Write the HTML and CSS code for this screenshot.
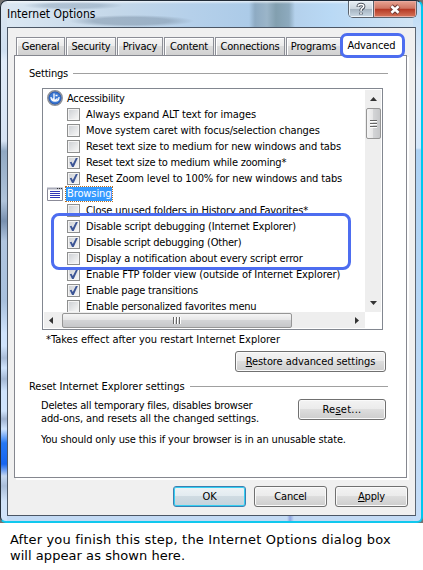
FILE: index.html
```html
<!DOCTYPE html>
<html lang="en">
<head>
<meta charset="utf-8">
<title>Internet Options</title>
<link rel="stylesheet" href="styles.css">
</head>
<body>
<div class="desktop">
<section class="window">
  <header class="titlebar">
    <h1>Internet Options</h1>
    <div class="caption">
      <span class="cap help"><svg width="12" height="14" viewBox="0 0 12 14"><path d="M3.200 5Q3.200 2.500 6 2.500T8.700 4.400Q8.700 5.600 7.300 6.400T6 9.200M6 10.500v2" fill="none" stroke="#4f5763" stroke-width="3.400"/><path d="M3.200 4.500Q3.200 2.500 6 2.500T8.700 4.200Q8.700 5.400 7.300 6.200T6 9M6 10.500v1.700" fill="none" stroke="#fff" stroke-width="1.500"/></svg></span>
      <span class="cap close"><svg width="14" height="11" viewBox="0 0 14 11"><path d="M3.200 2l7.600 7M10.800 2l-7.600 7" stroke="#703b36" stroke-width="4.600"/><path d="M3.400 2.200l7.200 6.600M10.600 2.200L3.400 8.800" stroke="#fff" stroke-width="2.600"/></svg></span>
    </div>
  </header>
  <main class="client">
    <nav class="tabs">
      <span class="tab t1">General</span><span class="tab t2">Security</span><span class="tab t3">Privacy</span><span class="tab t4">Content</span><span class="tab t5">Connections</span><span class="tab t6">Programs</span><span class="tab active">Advanced</span>
    </nav>
    <div class="panel">
      <h2 class="legend"><span>Settings</span></h2>
      <div class="listbox">
        <ul class="list">
          <li class="group"><svg width="16" height="16" viewBox="0 0 16 16"><circle cx="8" cy="8" r="7.200" fill="#2456b0" stroke="#8f9299" stroke-width="1.600"/><circle cx="8" cy="8" r="5.700" fill="#3c78d2"/><path d="M7 3.500v6M4 7q0 4 4 4.200t4-4.200M5.500 8.500L8 10.500l2.500-2M8.500 5.500h2" fill="none" stroke="#fff" stroke-width="1.300"/></svg><span class="name">Accessibility</span></li>
          <li class="wide"><i class="box"></i><span>Always expand ALT text for images</span></li>
          <li><i class="box"></i><span>Move system caret with focus/selection changes</span></li>
          <li><i class="box"></i><span>Reset text size to medium for new windows and tabs</span></li>
          <li class="tight"><i class="box on"></i><span>Reset text size to medium while zooming*</span></li>
          <li><i class="box on"></i><span>Reset Zoom level to 100% for new windows and tabs</span></li>
          <li class="group"><svg width="16" height="16" viewBox="0 0 16 16"><path d="M.5 2.500h15v12H.5z" fill="#fff" stroke="#8b8b98"/><path d="M0 2.500h16" stroke="#a8aab8" stroke-width="2"/><path d="M10 2.500h1M12 2.500h1M14 2.500h1" stroke="#333"/><path d="M3 5.500h10M3 7.500h10M3 9.500h10M3 11.500h10" stroke="#3036b8"/></svg><span class="name selected">Browsing</span></li>
          <li><i class="box"></i><span>Close unused folders in History and Favorites*</span></li>
          <li class="snug"><i class="box on"></i><span>Disable script debugging (Internet Explorer)</span></li>
          <li class="tight"><i class="box on"></i><span>Disable script debugging (Other)</span></li>
          <li class="snug"><i class="box"></i><span>Display a notification about every script error</span></li>
          <li class="wide"><i class="box on"></i><span>Enable FTP folder view (outside of Internet Explorer)</span></li>
          <li class="tight"><i class="box on"></i><span>Enable page transitions</span></li>
          <li class="tight"><i class="box"></i><span>Enable personalized favorites menu</span></li>
        </ul>
        <div class="vscroll">
          <svg class="up" width="7" height="4" viewBox="0 0 7 4"><path d="M0 4L3.500 0L7 4z" fill="#333"/></svg>
          <div class="vthumb"><b></b><b></b><b></b></div>
          <svg class="down" width="7" height="4" viewBox="0 0 7 4"><path d="M0 0h7L3.500 4z" fill="#333"/></svg>
        </div>
        <div class="hscroll">
          <svg width="4" height="7" viewBox="0 0 4 7"><path d="M4 0v7L0 3.500z" fill="#333"/></svg>
          <div class="hthumb"><b></b><b></b><b></b></div>
          <svg width="4" height="7" viewBox="0 0 4 7"><path d="M0 0v7l4-3.500z" fill="#333"/></svg>
        </div>
        <div class="callout"></div>
      </div>
      <p class="note">*Takes effect after you restart Internet Explorer</p>
      <button class="btn restore"><span><u>R</u>estore advanced settings</span></button>
      <h2 class="legend reset-title"><span>Reset Internet Explorer settings</span></h2>
      <div class="reset">
        <p><span class="l1">Deletes all temporary files, disables browser</span><br><span class="l2">add-ons, and resets all the changed settings.</span></p>
        <button class="btn reset-btn"><span>Re<u>s</u>et...</span></button>
      </div>
      <p class="warning">You should only use this if your browser is in an unusable state.</p>
    </div>
    <footer class="actions">
      <button class="btn ok">OK</button><button class="btn">Cancel</button><button class="btn"><span><u>A</u>pply</span></button>
    </footer>
  </main>
</section>
</div>
<p class="article"><span>After you finish this step, the Internet Options dialog box</span><br><span class="second">will appear as shown here.</span></p>
</body>
</html>
```
FILE: styles.css
```css
* { box-sizing: border-box; }
body {
  margin: 0; width: 423px; height: 570px; overflow: hidden; background: #fff; color: #000;
  font: 11px/13px "DejaVu Sans Condensed", "DejaVu Sans", sans-serif;
  font-stretch: condensed; white-space: nowrap; letter-spacing: -0.2px;
}
h1, h2, p, ul { margin: 0; padding: 0; font-size: inherit; font-weight: normal; list-style: none; }
u { text-underline-offset: 1px; }
.desktop { height: 523px; background: #737373; }
.window {
  height: 523px; border: 1px solid #222c38; border-right: 2px solid #00c8f0; border-bottom: 2px solid #10c8ee;
  border-radius: 7px 7px 6px 6px; overflow: hidden;
  background:
    linear-gradient(90deg, transparent 0 286px, #8fa4e0 289px, transparent 293px) 0 100% / 100% 5px no-repeat,
    linear-gradient(180deg, #dce6f0 0, #cfdff0 50px, #e0ebf8 60px, #d6e3f3 140px, #91a9c3 150px, #b0c4db 200px, #7890af 220px, #b0c5df 240px, #a8c0dd 300px, #cfe3fc 332px, #cfe3fc 345px, #a9bcd8 357px, #cfe3fc 367px, #a4b8d4 378px, #cfe3fc 390px, #cfe3fc 410px, #9fb2d0 418px, #cfe3fc 428px, #2678f4 442px, #1765f0 463px, #c4d7f1 475px, #a9bdd9 485px, #d0e2f8 500px) 0 0 / 6px 100% no-repeat,
    linear-gradient(180deg, #b7d8f4 0, #e4eefa 70px, #d5e8fb 147px, #add2f4 149px, #c5ddf7 100%) 100% 0 / 8px 100% no-repeat,
    linear-gradient(180deg, #ffffffb0 0, transparent 3px) 0 0 / 100% 5px no-repeat,
    radial-gradient(closest-side, #8da3b880 55%, transparent) 22px 0 / 100px 9px no-repeat,
    radial-gradient(closest-side, #8297ac90 60%, transparent) 68px 14px / 125px 12px no-repeat,
    linear-gradient(90deg, #dce8f3 0, #c5d8e9 110px, #b5d0ea 190px, #accbe8 248px, #8eabc3 254px, #9bb5c9 266px, #829faf 275px, #8daabe 288px, #b4d1ec 294px, #b9d9f5 330px, #d2e4f3 100%) 0 0 / 100% 27px no-repeat,
    #c3daf4;
  padding: 0 5px 6px 6px;
}
.titlebar { height: 26px; display: flex; justify-content: space-between; }
h1 { font-size: 12px; line-height: 16px; padding-top: 5px; letter-spacing: 0.03px; }
.caption { display: flex; width: 69px; height: 17px; margin-right: -1px; border: 1px solid #59616b; border-top: 0; border-radius: 0 0 5px 5px; overflow: hidden; }
.cap { display: flex; align-items: center; justify-content: center; }
.help { width: 25px; background: linear-gradient(#e8eff5, #cbd5de 48%, #a4b2bf 50%, #cbdae6); box-shadow: inset 0 0 0 1px #eef4f9; border-right: 1px solid #59616b; }
.close { flex: 1; background: linear-gradient(#e7a493, #cf7562 46%, #b43722 50%, #d6765b); box-shadow: inset 0 0 0 1px #e8aaa0; }
.client { height: 489px; background: #f0f0f0; border: 1px solid #4b5665; border-right-color: #5c6672; padding: 7px 7px 0 6px; }
.tabs { display: flex; gap: 1px; height: 20px; align-items: flex-end; padding-left: 2px; }
.tab { height: 18px; line-height: 18px; text-align: center; border: 1px solid #8c8e96; border-bottom: 0; background: linear-gradient(#f5f5f5, #ebebeb 48%, #dcdcdc 50%, #d1d1d1); box-shadow: inset 1px 1px #fff; }
.t1 { width: 49px; } .t2 { width: 50px; } .t3 { width: 46px; } .t4 { width: 50px; } .t5 { width: 70px; } .t6 { width: 55px; }
.active { width: 65px; height: 25px; line-height: 19px; margin: 0 -3px -3px -2px; border: 3px solid #4d6df0; border-radius: 7px; background: #fff; box-shadow: none; position: relative; z-index: 1; letter-spacing: -0.1px; padding-right: 2px; }
.panel { width: 393px; height: 423px; background: #fff; border: 1px solid #85878f; box-shadow: 2px 2px #fff; padding: 11px 18px 0 14px; }
.legend { display: flex; align-items: center; gap: 5px; height: 13px; }
.legend::after { content: ""; flex: 1; height: 1px; background: #a0a0a0; }
.listbox { position: relative; display: grid; grid-template: 222px 16px / 321px 16px; width: 341px; height: 242px; margin: 8px 0 0 13px; border: 1px solid #828790; padding: 1px; background: #fff; }
.list { overflow: hidden; padding-left: 23px; letter-spacing: -0.14px; }
.list .wide { letter-spacing: -0.09px; }
.list .snug { letter-spacing: -0.18px; }
.list .tight { letter-spacing: -0.22px; }
.list li { display: flex; align-items: center; height: 16px; gap: 6px; }
.list .group { margin-left: -20px; gap: 3px; letter-spacing: -0.25px; }
.box { width: 13px; height: 13px; flex: none; margin-top: 1px; border: 1px solid #8e8f8f; background: linear-gradient(135deg, #cfd2d6, #f6f6f6) content-box, #f4f4f4; padding: 1px; }
.on::before { content: ""; display: block; width: 9px; height: 9px; background: #3c5596; clip-path: polygon(8% 48%, 28% 42%, 42% 66%, 76% 0, 98% 0, 52% 100%, 34% 100%); }
.name { padding: 0 1px; height: 15px; line-height: 15px; }
.selected { color: #fff; background: #3399ff; outline: 1px dotted #b76d22; letter-spacing: -0.1px; height: 14px; line-height: 14px; }
.vscroll { background: #eee; display: flex; flex-direction: column; align-items: center; padding: 7px 0 7px; }
.vthumb { width: 15px; height: 31px; margin-top: 7px; border: 1px solid #969696; border-radius: 2px; background: linear-gradient(90deg, #f5f5f5, #e5e5e6 48%, #d3d4d6 50%, #c6c7c9); display: flex; flex-direction: column; align-items: center; justify-content: center; gap: 1px; }
.vthumb b { width: 7px; height: 2px; background: #666; border-bottom: 1px solid #fff; }
.down { margin-top: auto; }
.hscroll { background: #eee; width: 321px; display: flex; align-items: center; padding: 0 6px 0 5px; }
.hthumb { width: 230px; height: 15px; margin: 0 auto 0 9px; border: 1px solid #969696; border-radius: 2px; background: linear-gradient(#f5f5f5, #e5e5e6 48%, #d3d4d6 50%, #c6c7c9); display: flex; justify-content: center; align-items: center; gap: 1px; }
.hthumb b { width: 2px; height: 7px; background: #666; border-right: 1px solid #fff; }
.callout { position: absolute; left: 8px; top: 124px; width: 300px; height: 57px; border: 3px solid #4d6df0; border-radius: 8px; }
.note { margin: 3px 0 0 17px; letter-spacing: 0; }
.btn { display: flex; align-items: center; justify-content: center; height: 21px; width: 73px; padding: 0; font: inherit; letter-spacing: inherit; color: #000; border: 1px solid #707070; border-radius: 3px; background: linear-gradient(#f3f3f3, #ebebeb 48%, #ddd 50%, #cdcdcd); box-shadow: inset 0 0 0 1px #fafafa; }
.restore { width: 151px; margin: 5px 0 0 206px; letter-spacing: -0.08px; }
.reset-title { margin-top: 8px; letter-spacing: -0.04px; }
.reset { display: flex; justify-content: space-between; padding: 6px 2px 0 12px; height: 40px; }
.reset-btn { width: 88px; letter-spacing: 0.25px; }
.l2 { letter-spacing: -0.13px; }
.warning { margin-left: 12px; letter-spacing: -0.15px; }
.actions { display: flex; justify-content: flex-end; gap: 8px; padding-top: 8px; }
.ok { border-color: #3c7fb1; box-shadow: inset 0 0 0 1px #35cff2; background: linear-gradient(#eef3f5, #e2ebf0 48%, #cfdbe2 50%, #c4d3dc); }
.article { padding: 9px 0 0 10px; font: 13px/16px "DejaVu Sans", sans-serif; letter-spacing: 0.19px; }
.second { letter-spacing: 0.05px; }
```
